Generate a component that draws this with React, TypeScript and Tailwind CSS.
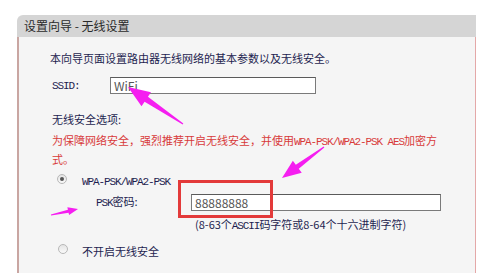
const arrow = (tip: [number, number], tail: [number, number], headLen: number, headW: number, shaftW: number) => {
  const dx = tail[0] - tip[0];
  const dy = tail[1] - tip[1];
  const len = Math.hypot(dx, dy);
  const ux = dx / len;
  const uy = dy / len;
  const nx = -uy;
  const ny = ux;
  const bx = tip[0] + ux * headLen;
  const by = tip[1] + uy * headLen;
  const pts = [
    [tip[0], tip[1]],
    [bx + nx * headW / 2, by + ny * headW / 2],
    [bx + nx * shaftW / 2, by + ny * shaftW / 2],
    [tail[0] + nx * 0.6, tail[1] + ny * 0.6],
    [tail[0] - nx * 0.6, tail[1] - ny * 0.6],
    [bx - nx * shaftW / 2, by - ny * shaftW / 2],
    [bx - nx * headW / 2, by - ny * headW / 2],
  ];
  return pts.map((p) => p.join(",")).join(" ");
};

const Latin = ({ children }: { children: string }) => (
  <span className="font-['Liberation_Mono',monospace] tracking-[-1.1px]">{children}</span>
);

const Radio = ({ checked }: { checked?: boolean }) => (
  <span className="flex h-[10px] w-[10px] items-center justify-center rounded-full border border-[#b8b8b8] bg-gradient-to-b from-[#e4e4e4] to-[#fafafa]">
    {checked && <span className="h-[4px] w-[4px] rounded-full bg-[#555]" />}
  </span>
);

export default function App() {
  return (
    <div className="relative h-[273px] w-[487px] overflow-hidden bg-white font-['Noto_Sans_CJK_SC','Noto_Sans',sans-serif] text-[11px] text-[#1e1e50]">
      <div className="ml-[17px] mt-[15px] w-[459px]">
        <div className="flex h-[22px] items-center rounded-tl-[6px] bg-[#d5d5d5] pl-[7px] text-[12px] text-[#2a2a2a]">
          设置向导 - 无线设置
        </div>
        <div className="h-[236px] border-l-2 border-r border-l-[#c9a6a2] border-r-[#e4a8a8] bg-[#f5f5f5] pl-[33px] pt-[13px]">
          <div className="-ml-[2px] leading-[16px]">本向导页面设置路由器无线网络的基本参数以及无线安全。</div>

          <div className="mt-[11px] flex h-[17px] items-center">
            <span className="w-[58px]"><Latin>SSID:</Latin></span>
            <div className="flex h-[17px] w-[206px] items-center border border-[#7a7a7a] border-t-[#5a5a5a] bg-white pl-[3px] text-[12px] text-[#555]">
              WiFi
            </div>
          </div>

          <div className="mt-[17px] leading-[17px]">无线安全选项:</div>
          <div className="mt-[4px] whitespace-nowrap leading-[17px] text-[#d83a3a]">
            为保障网络安全，强烈推荐开启无线安全，并使用<Latin>WPA-PSK/WPA2-PSK AES</Latin>加密方
            <br />
            式。
          </div>

          <div className="mt-[5px] flex h-[16px] items-center">
            <span className="ml-[5px] -mt-[4px]"><Radio checked /></span>
            <span className="ml-[15px]"><Latin>WPA-PSK/WPA2-PSK</Latin></span>
          </div>

          <div className="mt-[5px] flex h-[17px] items-center">
            <span className="ml-[44px] w-[95px]"><Latin>PSK</Latin>密码:</span>
            <div className="flex h-[17px] w-[250px] items-center border border-[#7a7a7a] border-t-[#5a5a5a] bg-white pl-[3px] text-[12px] text-[#555]">
              88888888
            </div>
          </div>

          <div className="ml-[143px] mt-[6px] leading-[14px]">
            (8-63个<Latin>ASCII</Latin>码字符或8-64个十六进制字符)
          </div>

          <div className="mt-[8px] flex h-[16px] items-center">
            <span className="ml-[6px]"><Radio /></span>
            <span className="ml-[14px] mt-[4px]">不开启无线安全</span>
          </div>
        </div>
      </div>

      <div className="absolute left-[178px] top-[180px] h-[38px] w-[95px] border-[3px] border-[#e33a3a]" />

      <svg className="pointer-events-none absolute inset-0" width="487" height="273">
        <polygon points={arrow([128, 87], [183, 124], 22, 17, 6)} fill="#f51ef0" />
        <polygon points={arrow([282, 178], [324, 147], 19, 15, 5)} fill="#f51ef0" />
        <polygon points={arrow([78, 209], [51, 215], 10, 8, 3)} fill="#f51ef0" />
      </svg>
    </div>
  );
}
